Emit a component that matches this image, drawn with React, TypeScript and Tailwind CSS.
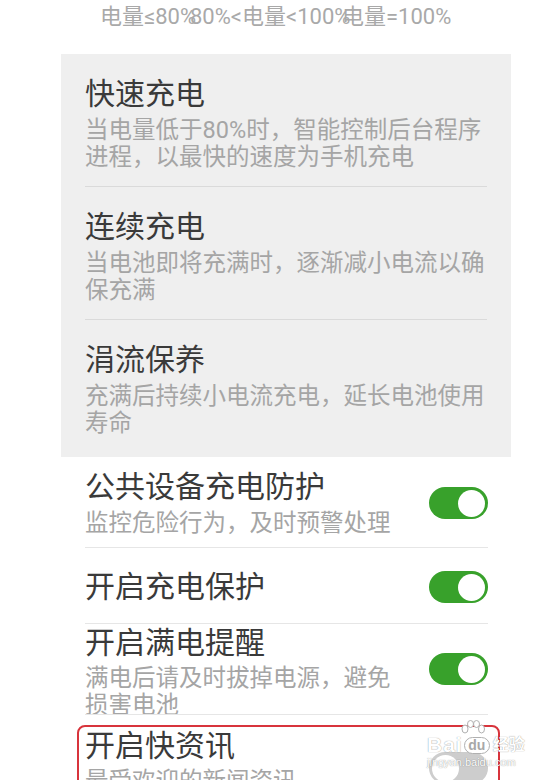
const CJK = { fontFamily: 'Roboto, "Noto Sans CJK SC", sans-serif' };
const ARIAL = { fontFamily: 'Arial, "Liberation Sans", sans-serif' };

const panelItems = [
  { title: '快速充电', lines: ['当电量低于80%时，智能控制后台程序', '进程，以最快的速度为手机充电'] },
  { title: '连续充电', lines: ['当电池即将充满时，逐渐减小电流以确', '保充满'] },
  { title: '涓流保养', lines: ['充满后持续小电流充电，延长电池使用', '寿命'] },
];

function Toggle({ on }: { on: boolean }) {
  return (
    <div
      className={
        on
          ? 'w-[59px] h-[32px] rounded-full bg-[#38a12b] flex items-center justify-end px-[3px] shrink-0'
          : 'w-[59px] h-[32px] rounded-full bg-[#cdcdcd] flex items-center justify-start px-[3px] shrink-0'
      }
    >
      <div className="w-[27px] h-[27px] rounded-full bg-white" />
    </div>
  );
}

function Sub({ lines }: { lines: string[] }) {
  return (
    <div className="mt-[5px] text-[23.5px] leading-[27px] text-[#a5a5a5] whitespace-nowrap">
      {lines.map((l) => (
        <div key={l}>{l}</div>
      ))}
    </div>
  );
}

// baidu jingyan watermark sitting over the last toggle
function Watermark() {
  return (
    <div className="absolute left-[427px] top-[720px] w-[110px] whitespace-nowrap text-white [text-shadow:0_0_1px_rgba(0,0,0,0.5)]">
      <svg width="24" height="16" viewBox="0 0 24 16" className="ml-[34px]">
        <g fill="#fff" stroke="#b0b0b0" strokeWidth="1">
          <ellipse cx="4" cy="9" rx="3" ry="4" />
          <ellipse cx="9.5" cy="4" rx="3" ry="3.5" />
          <ellipse cx="15.5" cy="4" rx="3" ry="3.5" />
          <ellipse cx="20.5" cy="9" rx="3" ry="4" />
        </g>
      </svg>
      <div className="flex items-center h-[18px]">
        <span className="text-[21px] leading-[18px] font-bold tracking-[1px]" style={ARIAL}>
          Bai
        </span>
        <span
          className="ml-[1px] w-[26px] h-[17px] rounded-full bg-white border border-[#b0b0b0] text-[#a8a8a8] text-[14px] leading-[15px] font-bold text-center [text-shadow:none]"
          style={ARIAL}
        >
          du
        </span>
        <span className="ml-[3px] text-[16px] leading-[18px] font-bold">经验</span>
      </div>
      <div className="mt-[2px] text-[11px] leading-[12px]" style={ARIAL}>
        jingyan.baidu.com
      </div>
    </div>
  );
}

export default function App() {
  return (
    <div className="relative w-[557px] h-[780px] overflow-hidden bg-white" style={CJK}>
      {/* mode labels */}
      <div className="flex pl-[100px] h-[34px] text-[22px] leading-[34px] text-[#a9a9a9] whitespace-nowrap">
        <span className="w-[90px]">电量≤80%</span>
        <span className="w-[152px]">80%&lt;电量&lt;100%</span>
        <span>电量=100%</span>
      </div>

      {/* charging modes panel */}
      <div className="ml-[61px] w-[450px] mt-[20px] bg-[#efefef]">
        {panelItems.map((it, i) => (
          <div
            key={it.title}
            className={
              i < panelItems.length - 1
                ? 'mx-6 pt-[22px] pb-[15px] border-b border-[#dadada]'
                : 'mx-6 pt-[22px] pb-[20px]'
            }
          >
            <div className="text-[30px] leading-[36px] text-[#3a3a3a]">{it.title}</div>
            <Sub lines={it.lines} />
          </div>
        ))}
      </div>

      {/* switches */}
      <div className="ml-[85px] w-[403px]">
        <div className="flex items-center justify-between pt-[12px] pb-[10px] border-b border-[#e6e6e6]">
          <div>
            <div className="text-[30px] leading-[36px] text-[#3a3a3a]">公共设备充电防护</div>
            <Sub lines={['监控危险行为，及时预警处理']} />
          </div>
          <Toggle on />
        </div>

        <div className="flex items-center justify-between pt-[21px] pb-[18px] border-b border-[#e6e6e6]">
          <div className="text-[30px] leading-[36px] text-[#3a3a3a]">开启充电保护</div>
          <Toggle on />
        </div>

        <div className="flex items-center justify-between h-[91px] overflow-hidden border-b border-[#e6e6e6]">
          <div className="self-start pt-[1px]">
            <div className="text-[30px] leading-[36px] text-[#3a3a3a]">开启满电提醒</div>
            <div className="mt-[4px] text-[23.5px] leading-[27px] text-[#a5a5a5] whitespace-nowrap">
              <div>满电后请及时拔掉电源，避免</div>
              <div>损害电池</div>
            </div>
          </div>
          <Toggle on />
        </div>
      </div>

      <div className="ml-[77px] w-[423px] mt-[10px] h-[80px] border-2 border-[#d8343c] rounded-[8px] pl-[6px] pr-[10px] pt-[1px] flex items-start justify-between">
        <div>
          <div className="text-[30px] leading-[36px] text-[#3a3a3a]">开启快资讯</div>
          <div className="mt-[4px] text-[23.5px] leading-[27px] text-[#a5a5a5] whitespace-nowrap">最受欢迎的新闻资讯</div>
        </div>
        <div className="mt-[24px]">
          <Toggle on={false} />
        </div>
      </div>

      <Watermark />
    </div>
  );
}
